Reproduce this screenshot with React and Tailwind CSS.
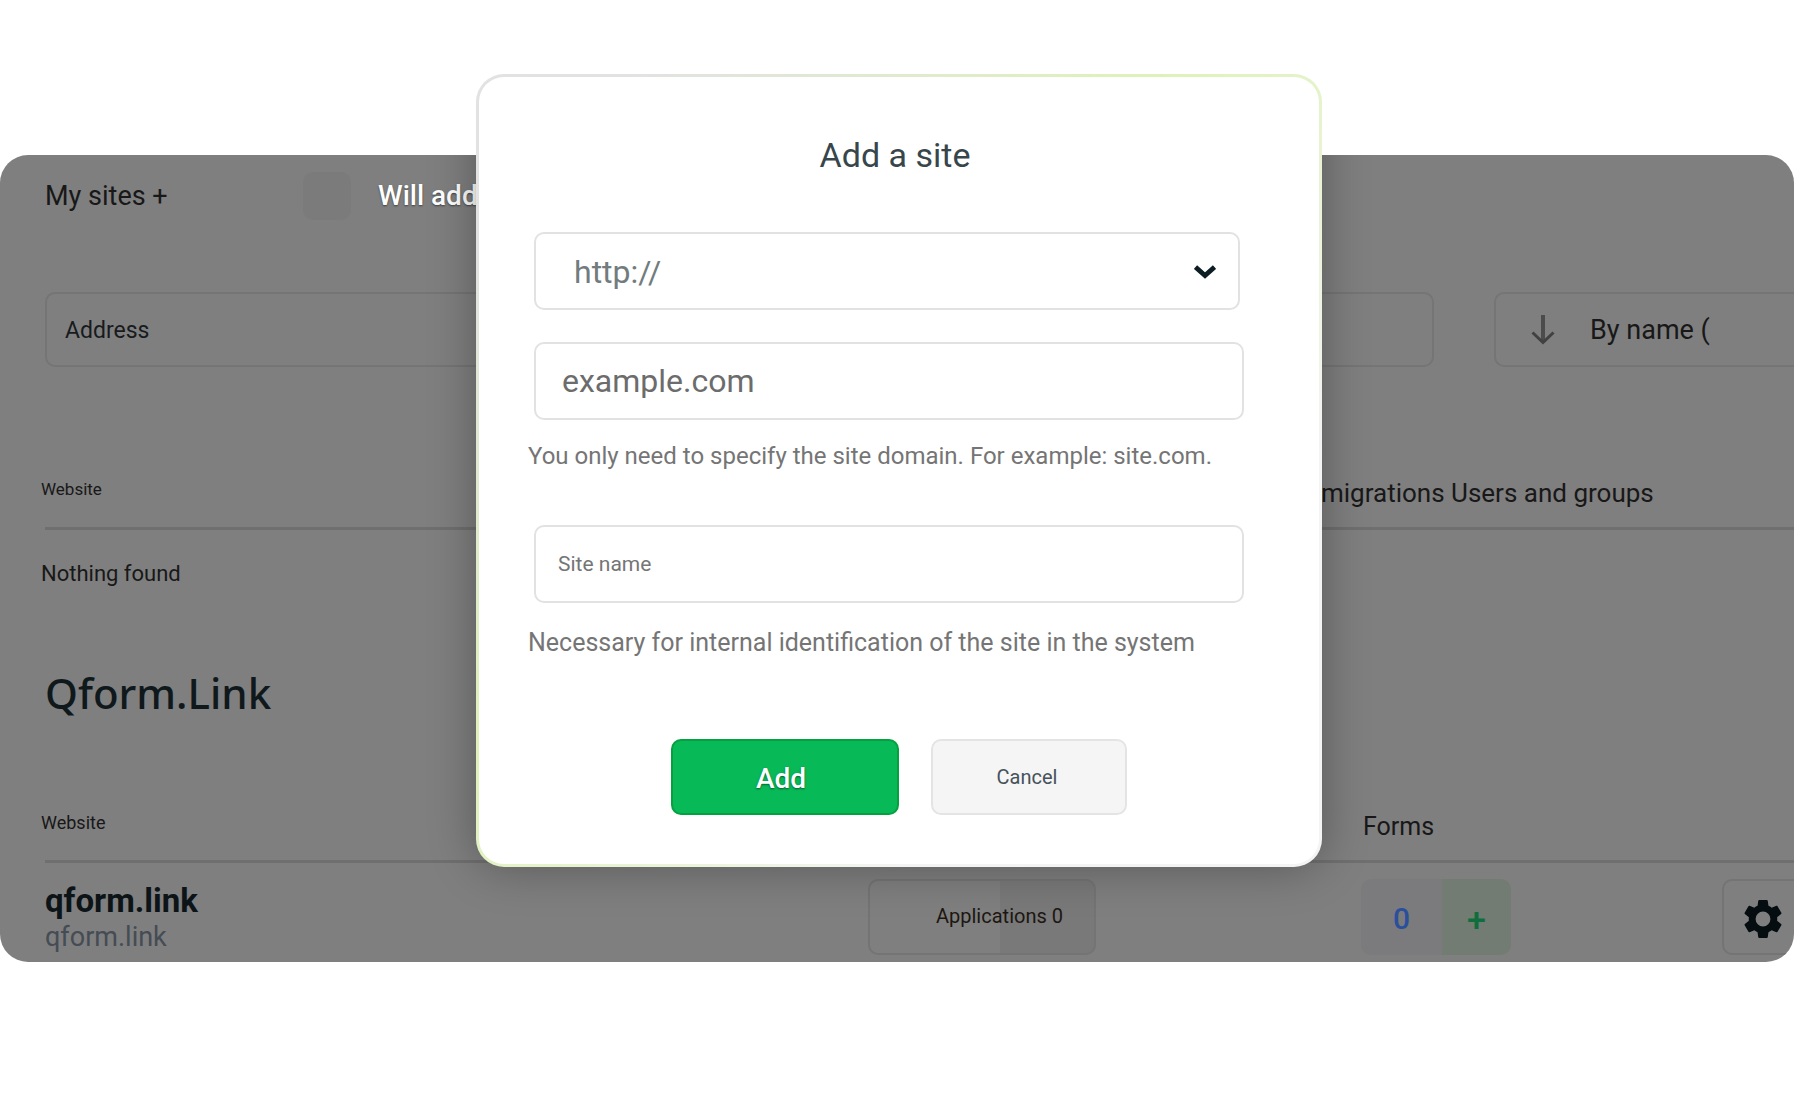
import React, { useState } from "react";

const Gear = () => (
    <svg viewBox="2.2 2 19.6 20" className="size-[38px]" fill="#060d10" aria-hidden="true">
        <path d="M19.43 12.98c.04-.32.07-.64.07-.98s-.03-.66-.07-.98l2.11-1.65c.19-.15.24-.42.12-.64l-2-3.46c-.12-.22-.39-.3-.61-.22l-2.49 1c-.52-.4-1.08-.73-1.69-.98l-.38-2.65A.49.49 0 0 0 14 2h-4c-.25 0-.46.18-.49.42l-.38 2.65c-.61.25-1.17.59-1.69.98l-2.49-1c-.23-.09-.49 0-.61.22l-2 3.46c-.13.22-.07.49.12.64l2.11 1.65c-.04.32-.07.65-.07.98s.03.66.07.98l-2.11 1.65c-.19.15-.24.42-.12.64l2 3.46c.12.22.39.3.61.22l2.49-1c.52.4 1.08.73 1.69.98l.38 2.65c.03.24.24.42.49.42h4c.25 0 .46-.18.49-.42l.38-2.65c.61-.25 1.17-.59 1.69-.98l2.49 1c.23.09.49 0 .61-.22l2-3.46c.12-.22.07-.49-.12-.64l-2.11-1.65zM12 15.9a3.9 3.9 0 1 1 0-7.8 3.9 3.9 0 0 1 0 7.8z" />
    </svg>
);

const ArrowDown = () => (
    <svg viewBox="0 0 24 30" className="h-[30px] w-6" fill="none" stroke="#414141" aria-hidden="true">
        <path d="M12 0v27" strokeWidth="4" stroke="#4c4c4c" />
        <path d="M1.5 17.5 12 27.500l10.500-10" strokeWidth="3" />
    </svg>
);

const Chevron = () => (
    <svg viewBox="0 0 22 14" className="pointer-events-none absolute right-6 top-[33px] h-[14px] w-[22px]" fill="none" aria-hidden="true">
        <path d="M1.500 2 11 10.500 20.500 2" stroke="#0c1e24" strokeWidth="4.800" />
    </svg>
);

const SitesPage = () => (
    <div className="relative overflow-hidden rounded-[28px] bg-[#7f7f7f] pb-[7px] pl-[45px] pt-[17px] text-[#181818]">
        <header className="flex h-12 items-center">
            <h1 className="w-[258px] text-[27px] leading-8">My sites +</h1>
            <button className="size-12 rounded-[10px] bg-[#7b7b7b]" aria-label="More"></button>
            <span className="ml-[27px] whitespace-nowrap text-[28px] font-medium leading-8 text-white [text-shadow:0_1px_2px_#00000080]">
                Will add
            </span>
        </header>

        <div className="mt-[72px] flex h-[75px]">
            <input
                type="text"
                placeholder="Address"
                aria-label="Address"
                className="min-w-0 flex-1 rounded-[10px] border-2 border-[#757575] px-[18px] pt-1 text-[23px] placeholder-[#181b1e] outline-none"
            />
            <button className="ml-[60px] flex w-[300px] items-center rounded-l-[10px] border-2 border-r-0 border-[#757575] pl-[35px] text-[27px]">
                <ArrowDown />
                <span className="ml-[35px] pt-[2px]">By name (</span>
            </button>
        </div>

        <table className="mt-[100px] w-full table-fixed border-collapse text-left">
            <thead>
                <tr className="h-[61px] border-b-[3px] border-[#6f6f6f] align-top">
                    <th className="pt-[10px] text-[17px] font-normal leading-6">
                        <span className="-ml-1">Website</span>
                    </th>
                    <th className="w-[473px] whitespace-nowrap pt-[10px] text-[26px] font-normal leading-8">
                        migrations Users and groups
                    </th>
                </tr>
            </thead>
            <tbody>
                <tr>
                    <td className="pt-7 text-[22px] leading-8" colSpan={2}>
                        <span className="-ml-1">Nothing found</span>
                    </td>
                </tr>
            </tbody>
        </table>

        <h2 className="mt-[75px] font-['Noto_Sans',sans-serif] text-[42px] font-medium leading-[56px] text-[#0f191c]">
            Qform.Link
        </h2>

        <table className="mt-20 w-full table-fixed border-collapse text-left">
            <thead>
                <tr className="h-[61px] border-b-[3px] border-[#6f6f6f] align-top">
                    <th className="pt-[10px] text-[18px] font-normal leading-6">
                        <span className="-ml-1">Website</span>
                    </th>
                    <th className="w-[495px]" aria-label="Applications"></th>
                    <th className="w-[359px] pt-[10px] text-[25px] font-normal leading-8">Forms</th>
                    <th className="w-[72px]" aria-label="Settings"></th>
                </tr>
            </thead>
            <tbody>
                <tr className="align-top">
                    <td className="pt-[18px]">
                        <p className="text-[33px] font-bold leading-10 text-[#0c1417]">qform.link</p>
                        <p className="text-[27px] leading-8 text-[#454c54]">qform.link</p>
                    </td>
                    <td className="pt-4">
                        <button className="h-[76px] w-[228px] rounded-[10px] border-2 border-[#747474] bg-linear-to-r from-[#7f7f7f] from-58% to-[#797979] to-58% pb-[2px] pl-[66px] text-left text-[20px] leading-6 text-[#1d1712]">
                            Applications 0
                        </button>
                    </td>
                    <td className="pt-4">
                        <div className="-ml-[2px] flex h-[76px] w-[150px] overflow-hidden rounded-[10px]">
                            <a href="#forms" className="flex w-[81px] items-center justify-center bg-[#7b7b7d] pt-[2px] text-[30px] font-medium text-[#2a4f9b]">
                                0
                            </a>
                            <button className="flex-1 bg-[#727c72] pt-1 text-[34px] font-medium text-[#0f6e3d]">+</button>
                        </div>
                    </td>
                    <td className="pt-4">
                        <button
                            className="flex h-[76px] w-full items-center rounded-l-[10px] border-2 border-r-0 border-[#747474] pl-5 pt-1"
                            aria-label="Site settings"
                        >
                            <Gear />
                        </button>
                    </td>
                </tr>
            </tbody>
        </table>

        {/* shadow cast by the dialog, only over the page */}
        <div className="pointer-events-none absolute inset-x-0 -top-[81px] flex justify-center pl-1">
            <div className="h-[793px] w-[846px] rounded-[28px] shadow-[0_0_48px_#00000050]"></div>
        </div>
    </div>
);

const AddSiteDialog = () => {
    const [protocol, setProtocol] = useState("http://");
    const [domain, setDomain] = useState("");
    const [name, setName] = useState("");

    return (
        <div
            role="dialog"
            aria-labelledby="dialog-title"
            className="w-[846px] rounded-[28px] bg-linear-135 from-[#e2e2e2] from-10% via-[#def2b8] via-42% to-[#f4f4f4] to-75% p-[3px]"
        >
            <form className="rounded-[25px] bg-white px-[55px] pb-[49px] pt-[58px]" onSubmit={(e) => e.preventDefault()}>
                <h2 id="dialog-title" className="pr-2 text-center text-[34px] leading-10 text-[#37464b]">
                    Add a site
                </h2>

                <div className="relative mt-[57px] h-[78px] w-[706px]">
                    <select
                        value={protocol}
                        onChange={(e) => setProtocol(e.target.value)}
                        aria-label="Protocol"
                        className="size-full appearance-none rounded-[10px] border-2 border-[#e2e2e2] bg-white pl-[38px] pt-[2px] text-[32px] text-[#727c7e] outline-none"
                    >
                        <option>http://</option>
                        <option>https://</option>
                    </select>
                    <Chevron />
                </div>

                <input
                    id="domain"
                    type="text"
                    value={domain}
                    onChange={(e) => setDomain(e.target.value)}
                    placeholder="example.com"
                    className="mt-8 h-[78px] w-[710px] rounded-[10px] border-2 border-[#e2e2e2] px-[26px] text-[32px] placeholder-[#6c6c6c] outline-none"
                />
                <label htmlFor="domain" className="-ml-[6px] mt-5 block text-[24px] leading-8 text-[#757575]">
                    You only need to specify the site domain. For example: site.com.
                </label>

                <input
                    id="site-name"
                    type="text"
                    value={name}
                    onChange={(e) => setName(e.target.value)}
                    placeholder="Site name"
                    className="mt-[53px] h-[78px] w-[710px] rounded-[10px] border-2 border-[#e2e2e2] px-[22px] text-[21px] placeholder-[#757575] outline-none"
                />
                <label htmlFor="site-name" className="-ml-[6px] mt-6 block text-[25px] leading-8 text-[#757575]">
                    Necessary for internal identification of the site in the system
                </label>

                <div className="mt-20 flex justify-center gap-8">
                    <button
                        type="submit"
                        className="h-[76px] w-[228px] rounded-[10px] border-2 border-[#05a040] bg-[#08b957] pr-2 pt-1 text-[28px] font-medium text-white [text-shadow:0_1px_2px_#00000080]"
                    >
                        Add
                    </button>
                    <button type="button" className="h-[76px] w-[196px] rounded-[10px] border-2 border-[#e4e4e4] bg-[#f5f5f5] pr-1 text-[20px] text-[#46525a]">
                        Cancel
                    </button>
                </div>
            </form>
        </div>
    );
};

const App = () => {
    return (
        <main className="grid min-h-screen content-start overflow-hidden bg-white font-['Roboto',sans-serif]">
            <div className="col-start-1 row-start-1 pt-[155px]">
                <SitesPage />
            </div>
            <div className="z-10 col-start-1 row-start-1 flex items-start justify-center pl-1 pt-[74px]">
                <AddSiteDialog />
            </div>
        </main>
    );
};

export default App;
